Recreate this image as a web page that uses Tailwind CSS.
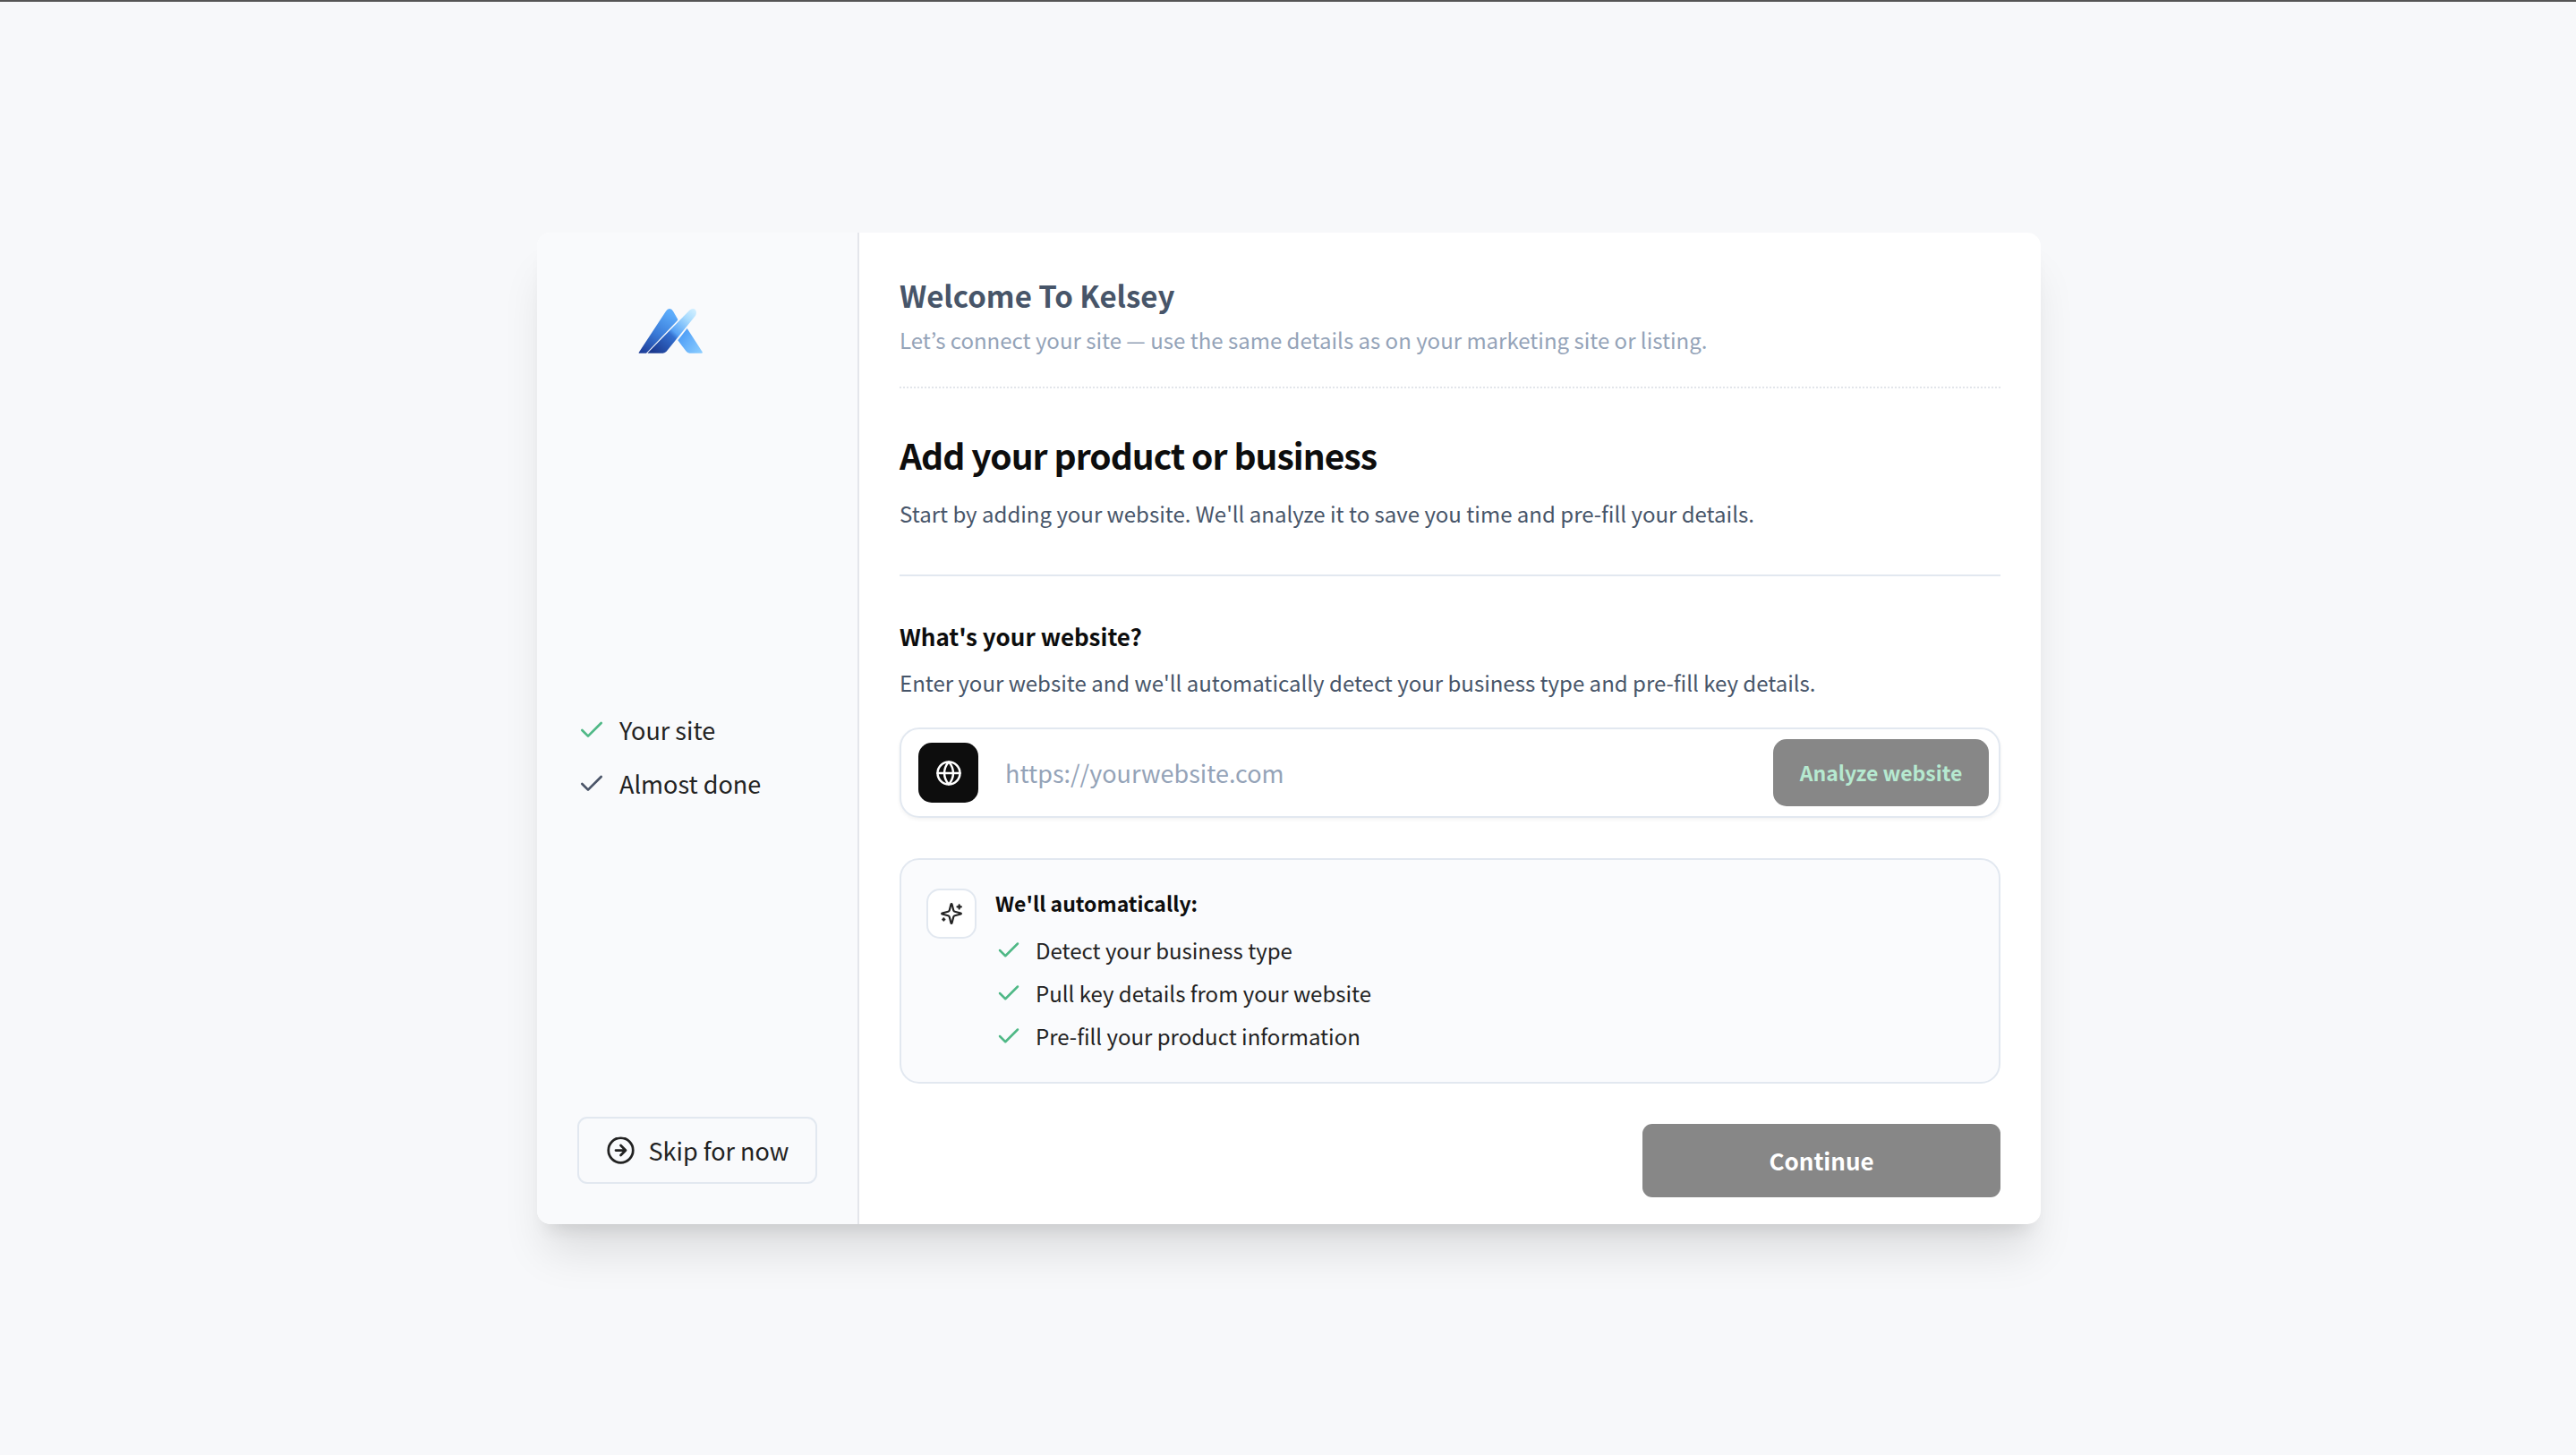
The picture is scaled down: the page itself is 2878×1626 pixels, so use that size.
<!DOCTYPE html>
<html lang="en">
<head>
<meta charset="utf-8">
<meta name="viewport" content="width=device-width, initial-scale=1">
<title>Welcome To Kelsey</title>
<script src="https://cdn.jsdelivr.net/npm/@tailwindcss/browser@4"></script>
</head>
<body class="min-h-screen flex flex-col bg-[#f7f8fa] font-['Noto_Sans_CJK_KR','Noto_Sans',sans-serif] text-[27px] leading-[45px] text-[#222222] border-t-2 border-[#555555]">
<div class="flex flex-1 items-center justify-center pl-0.5">
  <div class="flex w-full max-w-[1680px] rounded-[15px] bg-white shadow-[0_40px_50px_-10px_rgb(0_0_0/0.11),0_16px_20px_-12px_rgb(0_0_0/0.11)]">

    <aside class="flex w-[360px] shrink-0 flex-col justify-between rounded-l-[15px] border-r-2 border-[#e4e6eb] bg-[#f9fafc] p-[45px]">
      <svg class="h-[138px] w-[207px]" viewBox="-165 -75 621 414" role="img" aria-label="Kelsey">
        <defs>
          <linearGradient id="left" gradientUnits="userSpaceOnUse" x1="60" y1="200" x2="150" y2="60">
            <stop offset="0" stop-color="#1d3c98"/><stop offset=".5" stop-color="#3a7bd8"/><stop offset="1" stop-color="#5cacfb"/>
          </linearGradient>
          <linearGradient id="middle" gradientUnits="userSpaceOnUse" x1="95" y1="195" x2="228" y2="50">
            <stop offset="0" stop-color="#1b398f"/><stop offset=".42" stop-color="#3470d0"/><stop offset=".5" stop-color="#57a3f6"/><stop offset=".8" stop-color="#a6dafe"/><stop offset="1" stop-color="#cfeeff"/>
          </linearGradient>
          <linearGradient id="right" gradientUnits="userSpaceOnUse" x1="178" y1="140" x2="250" y2="190">
            <stop offset="0" stop-color="#4f9ff7"/><stop offset="1" stop-color="#8accff"/>
          </linearGradient>
        </defs>
        <path fill="url(#left)" d="M41 194 41 192 132 53Q137 45 144 45Q152 45 156 53L172 81 171 84 66 194Z"/>
        <path fill="url(#middle)" d="M71 194 72 192 211 50Q217 45 223 45Q232 46 234 56Q234 62 231 68L135 187Q129 194 122 194Z"/>
        <path fill="url(#right)" d="M203 111 254 190Q256 194 251 194H211Q204 194 199 187L172 151Z"/>
      </svg>

      <ol class="flex flex-col gap-[15px]">
        <li class="flex items-center gap-[15px]">
          <svg class="size-8 text-[#4fb886]" viewBox="0 0 24 24" fill="none" stroke="currentColor" stroke-width="2" stroke-linecap="round" stroke-linejoin="round" aria-hidden="true"><path d="M20 6 9 17l-5-5"/></svg>
          Your site
        </li>
        <li class="flex items-center gap-[15px]">
          <svg class="size-8 text-[#4a5468]" viewBox="0 0 24 24" fill="none" stroke="currentColor" stroke-width="2" stroke-linecap="round" stroke-linejoin="round" aria-hidden="true"><path d="M20 6 9 17l-5-5"/></svg>
          Almost done
        </li>
      </ol>

      <button type="button" class="flex h-[75px] items-center justify-center gap-[15px] rounded-[11px] border-2 border-[#e2e8f0]">
        <svg class="size-[33px]" viewBox="0 0 24 24" fill="none" stroke="currentColor" stroke-width="2" stroke-linecap="round" stroke-linejoin="round" aria-hidden="true"><circle cx="12" cy="12" r="10"/><path d="M8 12h8M12 16l4-4-4-4"/></svg>
        Skip for now
      </button>
    </aside>

    <main class="flex min-w-0 flex-1 flex-col px-[45px] pt-12 pb-[30px]">
      <header class="border-b-2 border-dotted border-[#e2e5ea] pb-[34px]">
        <p class="text-[33px] leading-[44px] font-bold text-[#475569]">Welcome To Kelsey</p>
        <p class="mt-2.5 text-2xl leading-9 text-[#94a3b8]">Let’s connect your site — use the same details as on your marketing site or listing.</p>
      </header>

      <div class="border-b-2 border-[#e2e8f0] pt-[46px] pb-[50px]">
        <h1 class="text-[39px] leading-14 font-bold tracking-tight text-[#0d0d0d]">Add your product or business</h1>
        <p class="mt-5 text-2xl leading-9 text-[#475569]">Start by adding your website. We'll analyze it to save you time and pre-fill your details.</p>
      </div>

      <form class="flex flex-col pt-[46px]">
        <label for="website" class="text-[26px] leading-[42px] font-bold text-[#0d0d0d]">What's your website?</label>
        <p class="mt-[13px] text-2xl leading-9 text-[#475569]">Enter your website and we'll automatically detect your business type and pre-fill key details.</p>

        <div class="mt-8 flex h-[101px] items-center rounded-[22px] border-2 border-[#e2e8f0] bg-white pr-[11px] pl-[19px] shadow-[0_2px_4px_rgb(0_0_0/0.05)]">
          <span class="flex size-[67px] items-center justify-center rounded-[15px] bg-[#0d0d0d] text-white">
            <svg class="size-[30px]" viewBox="0 0 24 24" fill="none" stroke="currentColor" stroke-width="2" stroke-linecap="round" stroke-linejoin="round" aria-hidden="true"><circle cx="12" cy="12" r="10"/><path d="M2 12h20M12 2a15.3 15.3 0 0 1 4 10 15.3 15.3 0 0 1-4 10 15.3 15.3 0 0 1-4-10 15.3 15.3 0 0 1 4-10z"/></svg>
          </span>
          <input id="website" type="url" placeholder="https://yourwebsite.com" class="h-[67px] min-w-0 flex-1 px-[30px] outline-none placeholder:text-[#94a3b8]">
          <button type="button" class="h-[75px] w-[241px] rounded-[15px] bg-[#878787] text-[23px] font-bold text-[#b6e9d0]">Analyze website</button>
        </div>

        <section class="mt-[45px] flex gap-[21px] rounded-[22px] border-2 border-[#e2e8f0] bg-[#fafbfd] px-7 pt-[30px] pb-[33px] text-2xl leading-9">
          <span class="mt-0.5 flex size-14 shrink-0 items-center justify-center rounded-[15px] border-2 border-[#e2e8f0] bg-white">
            <svg class="size-[26px]" viewBox="0 0 24 24" fill="none" stroke="currentColor" stroke-width="2" stroke-linecap="round" stroke-linejoin="round" aria-hidden="true"><path d="M9.937 15.5A2 2 0 0 0 8.5 14.063l-6.135-1.582a.5.5 0 0 1 0-.962L8.5 9.936A2 2 0 0 0 9.937 8.5l1.582-6.135a.5.5 0 0 1 .963 0L14.063 8.5A2 2 0 0 0 15.5 9.937l6.135 1.581a.5.5 0 0 1 0 .964L15.5 14.063a2 2 0 0 0-1.437 1.437l-1.582 6.135a.5.5 0 0 1-.963 0z"/><path d="M20 3v4M22 5h-4M4 17v2M5 18H3"/></svg>
          </span>
          <div>
            <h2 class="text-[23px] leading-9 font-bold text-[#0d0d0d]">We'll automatically:</h2>
            <ul class="mt-[17px] flex flex-col gap-3">
              <li class="flex items-center gap-[15px]">
                <svg class="size-[30px] text-[#4fb886]" viewBox="0 0 24 24" fill="none" stroke="currentColor" stroke-width="2" stroke-linecap="round" stroke-linejoin="round" aria-hidden="true"><path d="M20 6 9 17l-5-5"/></svg>
                Detect your business type
              </li>
              <li class="flex items-center gap-[15px]">
                <svg class="size-[30px] text-[#4fb886]" viewBox="0 0 24 24" fill="none" stroke="currentColor" stroke-width="2" stroke-linecap="round" stroke-linejoin="round" aria-hidden="true"><path d="M20 6 9 17l-5-5"/></svg>
                Pull key details from your website
              </li>
              <li class="flex items-center gap-[15px]">
                <svg class="size-[30px] text-[#4fb886]" viewBox="0 0 24 24" fill="none" stroke="currentColor" stroke-width="2" stroke-linecap="round" stroke-linejoin="round" aria-hidden="true"><path d="M20 6 9 17l-5-5"/></svg>
                Pre-fill your product information
              </li>
            </ul>
          </div>
        </section>

        <button type="submit" class="mt-[45px] h-[82px] w-[400px] self-end rounded-[11px] bg-[#878787] pb-0.5 text-[26px] font-bold text-white">Continue</button>
      </form>
    </main>
  </div>
</div>
</body>
</html>
